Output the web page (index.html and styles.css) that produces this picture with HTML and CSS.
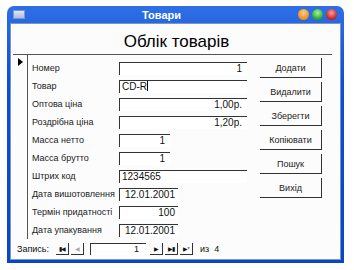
FILE: index.html
```html
<!DOCTYPE html>
<html lang="uk">
<head>
  <meta charset="UTF-8">
  <title>Товари</title>
  <link rel="stylesheet" href="styles.css">
</head>
<body>
  <div class="window">
    <header class="titlebar">
      <span class="app-icon"></span>
      <span class="title">Товари</span>
      <span class="dots">
        <i class="dot orange"></i>
        <i class="dot green"></i>
        <i class="dot red"></i>
      </span>
    </header>

    <div class="client">
      <h1>Облік товарів</h1>

      <div class="form">
        <div class="selector"><span class="arrow"></span></div>

        <div class="fields">
          <label>Номер</label><span class="field wide right">1</span>
          <label>Товар</label><span class="field wide">CD-R<i class="caret"></i></span>
          <label>Оптова ціна</label><span class="field wide right">1,00р.</span>
          <label>Роздрібна ціна</label><span class="field wide right">1,20р.</span>
          <label>Масса нетто</label><span class="field short right">1</span>
          <label>Масса брутто</label><span class="field short right">1</span>
          <label>Штрих код</label><span class="field wide">1234565</span>
          <label>Дата вишотовлення</label><span class="field date right">12.01.2001</span>
          <label>Термін придатності</label><span class="field date right">100</span>
          <label>Дата упакування</label><span class="field date right">12.01.2001</span>
        </div>

        <div class="buttons">
          <button>Додати</button>
          <button>Видалити</button>
          <button>Зберегти</button>
          <button>Копіювати</button>
          <button>Пошук</button>
          <button>Вихід</button>
        </div>
      </div>

      <footer class="nav">
        <span>Запись:</span>
        <span class="nav-btn">&#9646;&#9664;</span>
        <span class="nav-btn disabled">&#9664;</span>
        <span class="nav-field">1</span>
        <span class="nav-btn">&#9654;</span>
        <span class="nav-btn">&#9654;&#9646;</span>
        <span class="nav-btn">&#9654;*</span>
        <span class="count">из &nbsp;4</span>
      </footer>
    </div>
  </div>
</body>
</html>
```

FILE: styles.css
```css
* {
  box-sizing: border-box;
  margin: 0;
  padding: 0;
}

body {
  background: #fff;
  font-family: "Liberation Sans", Arial, sans-serif;
  font-size: 10px;
  color: #111;
}

.window {
  width: 337px;
  height: 257px;
  margin: 6px 0 0 7px;
  padding: 0 3px 3px;
  border-radius: 7px 7px 0 0;
  background: linear-gradient(#2f6fe6, #0a4fd4 30%, #0846c6);
  display: flex;
  flex-direction: column;
}

.titlebar {
  height: 19px;
  display: flex;
  align-items: center;
  padding: 0 4px 0 3px;
  color: #fff;

  .app-icon {
    width: 12px;
    height: 9px;
    background: linear-gradient(#dfe7f7, #a9bbdf);
    border: 1px solid #7f95c9;
  }

  .title {
    flex: 1;
    text-align: center;
    font-weight: bold;
    font-size: 11px;
  }

  .dots {
    display: flex;
    gap: 3px;
  }

  .dot {
    width: 11px;
    height: 11px;
    border-radius: 50%;
  }

  .orange { background: radial-gradient(circle at 50% 35%, #ffd08a, #f08a10 70%); }
  .green { background: radial-gradient(circle at 50% 35%, #a8f0a0, #22a82a 70%); }
  .red { background: radial-gradient(circle at 50% 35%, #f5a0a0, #c81e1e 70%); }
}

.client {
  flex: 1;
  background: #fcfcfc;
  border: 1px solid #7d95c4;
  display: flex;
  flex-direction: column;
  padding-left: 2px;

  h1 {
    height: 30px;
    text-align: center;
    font-weight: normal;
    font-size: 17px;
    padding-top: 8px;
    color: #000;
  }
}

.form {
  flex: 1;
  display: flex;
  border-top: 1px solid #555;
  margin-right: 8px;

  .selector {
    width: 15px;
    border-right: 1px solid #555;
    padding: 3px 0 0 5px;
  }

  .arrow {
    display: block;
    width: 0;
    height: 0;
    border-left: 5px solid #000;
    border-top: 4px solid transparent;
    border-bottom: 4px solid transparent;
  }
}

.fields {
  display: grid;
  grid-template-columns: 87px 128px;
  grid-auto-rows: 18px;
  align-items: center;
  padding: 4px 0 0 4px;
  width: 232px;

  label {
    font-size: 9px;
    white-space: nowrap;
    color: #222;
  }
}

.field {
  height: 13px;
  background: #fff;
  border-top: 1px solid #333;
  border-left: 1px solid #333;
  font-size: 10px;
  line-height: 12px;
  padding: 0 5px 0 2px;
  color: #111;

  &.right { text-align: right; }
  &.wide { width: 128px; }
  &.short { width: 51px; }
  &.date { width: 59px; padding-right: 3px; }

  .caret {
    display: inline-block;
    width: 1px;
    height: 10px;
    background: #000;
    vertical-align: -1px;
  }
}

.buttons {
  display: flex;
  flex-direction: column;
  gap: 4px;
  padding-top: 3px;

  button {
    width: 62px;
    height: 20px;
    background: #fcfcfc;
    border: none;
    border-right: 1px solid #333;
    border-bottom: 1px solid #333;
    font-family: "Liberation Sans", Arial, sans-serif;
    font-size: 9px;
    color: #222;
  }
}

.nav {
  height: 20px;
  display: flex;
  align-items: center;
  gap: 2px;
  padding-left: 4px;
  font-size: 9px;

  .nav-btn {
    min-width: 13px;
    height: 12px;
    padding: 0 2px;
    border-right: 1px solid #333;
    border-bottom: 1px solid #333;
    font-size: 6px;
    line-height: 12px;
    text-align: center;
    letter-spacing: -1px;
  }

  .disabled { color: #aaa; margin-right: 4px; }

  .nav-field {
    width: 56px;
    height: 12px;
    background: #fff;
    border-top: 1px solid #333;
    border-left: 1px solid #333;
    text-align: right;
    padding-right: 7px;
    line-height: 11px;
    margin-right: 2px;
  }

  .count { margin-left: 5px; }

  > span:first-child { margin-right: 5px; }
}
```
